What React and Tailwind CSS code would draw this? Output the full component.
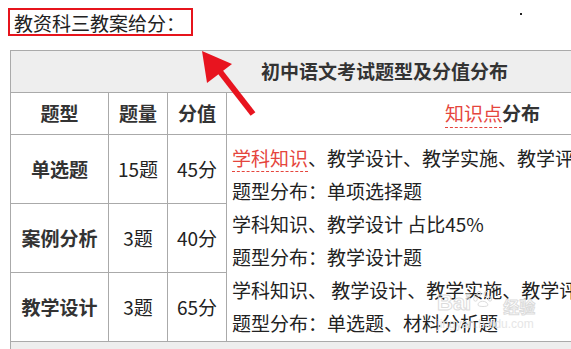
import React from 'react';

const cjk = "font-['Noto_Sans_CJK_SC','Noto_Sans',sans-serif]";

function RedTerm({ children }) {
  return (
    <span className="text-[#e5453d] border-b border-dashed border-[#e5453d]">{children}</span>
  );
}

function Cell({ children, className = '' }) {
  return (
    <div className={`bg-white flex items-center justify-center ${className}`}>{children}</div>
  );
}

export default function App() {
  const rows = [
    { tipo: '单选题', cantidad: '15题', valor: '45分' },
    { tipo: '案例分析', cantidad: '3题', valor: '40分' },
    { tipo: '教学设计', cantidad: '3题', valor: '65分' },
  ];

  return (
    <div className={`relative w-[571px] h-[349px] overflow-hidden bg-white text-[19px] text-[#222] ${cjk}`}>
      {/* Título con recuadro rojo */}
      <div className="pt-2 pl-2">
        <div className="inline-flex items-center h-[28px] w-[185px] border-2 border-[#e6141c] pl-[4px] leading-none">
          教资科三教案给分：
        </div>
      </div>

      {/* Tabla */}
      <div className="mt-[13px] ml-[10px] w-[749px] grid grid-cols-[97px_58px_58px_531px] grid-rows-[41px_41px_68px_68px_68px_20px] gap-px p-px bg-[#aaaaaa]">
        <div className="col-span-4 bg-[#eeeeee] flex items-center justify-center font-bold text-[#333]">
          初中语文考试题型及分值分布
        </div>

        <Cell className="font-bold text-[#333]">题型</Cell>
        <Cell className="font-bold text-[#333]">题量</Cell>
        <Cell className="font-bold text-[#333]">分值</Cell>
        <Cell className="text-[#333]">
          <RedTerm>知识点</RedTerm>
          <span className="font-bold">分布</span>
        </Cell>

        {rows.map((r, i) => (
          <React.Fragment key={r.tipo}>
            <Cell className="font-bold text-[#333]">{r.tipo}</Cell>
            <Cell>{r.cantidad}</Cell>
            <Cell>{r.valor}</Cell>
            {i === 0 && (
              <div className="row-span-3 bg-white flex flex-col justify-center pl-[5px] leading-[33px] whitespace-nowrap pt-[3px]">
                <div><RedTerm>学科知识</RedTerm>、教学设计、教学实施、教学评价 占比15%</div>
                <div>题型分布：单项选择题</div>
                <div>学科知识、教学设计 占比45%</div>
                <div>题型分布：教学设计题</div>
                <div>学科知识、 教学设计、教学实施、教学评价 占比40%</div>
                <div>题型分布：单选题、材料分析题</div>
              </div>
            )}
          </React.Fragment>
        ))}

        <div className="col-span-4 bg-[#eeeeee]" />
      </div>

      {/* Flecha roja */}
      <svg className="absolute left-[196px] top-[46px]" width="64" height="74" viewBox="0 0 64 74">
        <line x1="57" y1="68" x2="22" y2="23" stroke="#e8141f" strokeWidth="6" />
        <polygon points="6,5 36,18 11,37" fill="#e8141f" />
      </svg>

      {/* Punto */}
      <div className="absolute left-[520px] top-[13px] w-[2px] h-[2px] bg-[#222]" />

      {/* Marca de agua */}
      <div className="absolute left-[437px] top-[292px] flex flex-col items-start text-transparent leading-none select-none font-['Liberation_Sans',sans-serif]">
        <div className="flex items-center gap-[2px]">
          <span className="text-[22px] font-bold [-webkit-text-stroke:1px_#dcdcdc]">Bai</span>
          <svg width="20" height="18" viewBox="0 0 20 18" className="-mt-2">
            <g fill="none" stroke="#dcdcdc" strokeWidth="1">
              <ellipse cx="6" cy="4" rx="2" ry="2.5" />
              <ellipse cx="13" cy="4" rx="2" ry="2.5" />
              <ellipse cx="2.5" cy="9" rx="1.8" ry="2.2" />
              <ellipse cx="17" cy="9" rx="1.8" ry="2.2" />
              <path d="M5 15 C5 10 14 10 15 15 C15 17 5 17 5 15 Z" />
            </g>
          </svg>
          <span className={`ml-[8px] mt-[6px] text-[16px] font-bold [-webkit-text-stroke:1px_#dcdcdc] ${cjk}`}>经验</span>
        </div>
        <span className="mt-[4px] text-[12px] text-[#e6e6e6]">jingyan.baidu.com</span>
      </div>
    </div>
  );
}
